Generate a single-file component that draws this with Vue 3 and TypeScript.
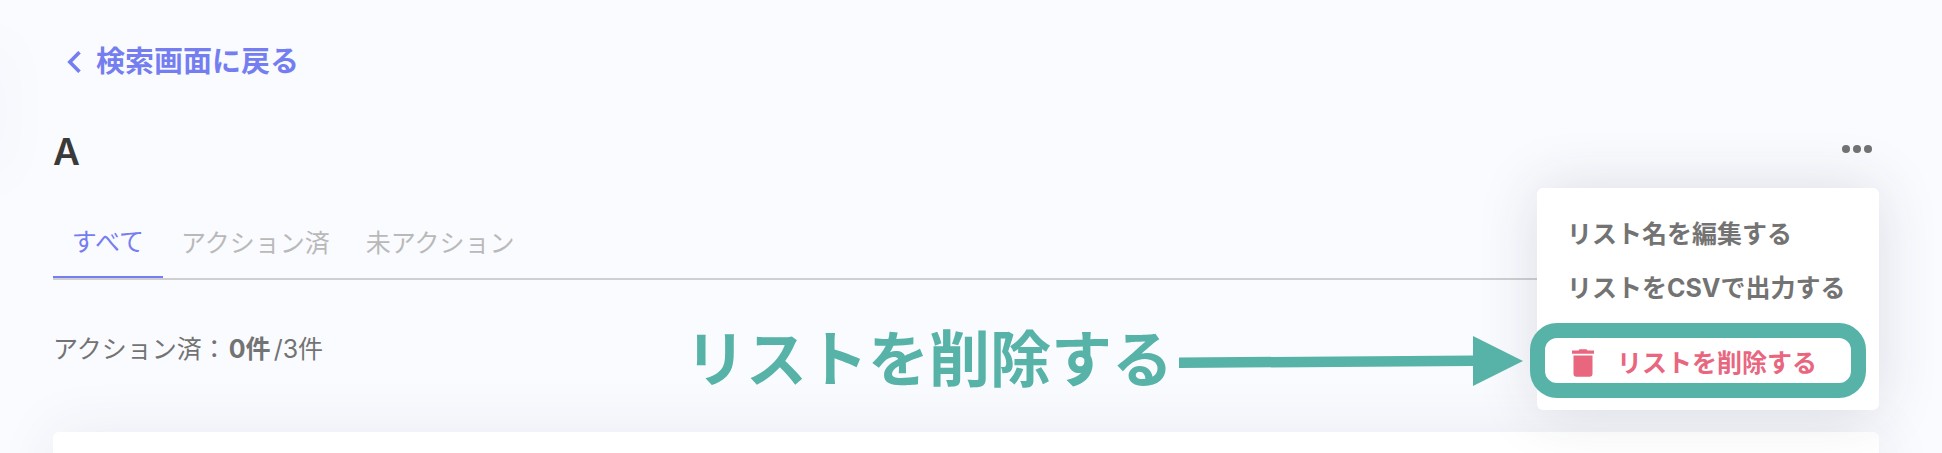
<script setup lang="ts">
import { ref } from 'vue'

interface Tab {
  id: string
  label: string
}

const tabs: Tab[] = [
  { id: 'all', label: 'すべて' },
  { id: 'done', label: 'アクション済' },
  { id: 'todo', label: '未アクション' },
]
const activeTab = ref('all')
const menuOpen = ref(true)
const doneCount = ref(0)
const totalCount = ref(3)
</script>

<template>
  <main class="page">
    <a class="back" href="#">
      <svg class="back-icon" viewBox="0 0 14 22" aria-hidden="true">
        <path d="M12.500 1.200 2.800 11l9.700 9.800" fill="none" stroke="currentColor" stroke-width="3.600" />
      </svg>
      検索画面に戻る
    </a>

    <header class="head">
      <h1 class="title">A</h1>
      <div class="more">
        <button class="more-button" type="button" aria-label="メニュー" :aria-expanded="menuOpen" @click="menuOpen = !menuOpen">
          <svg class="dots" viewBox="0 0 30 8" aria-hidden="true">
            <circle cx="4" cy="4" r="4" />
            <circle cx="15" cy="4" r="4" />
            <circle cx="26" cy="4" r="4" />
          </svg>
        </button>
        <div v-if="menuOpen" class="menu">
          <button class="item" type="button">リスト名を編集する</button>
          <button class="item" type="button">リストをCSVで出力する</button>
          <div class="danger">
            <button class="item delete" type="button">
              <svg class="trash" viewBox="0 -4 22 32" aria-hidden="true">
                <path d="M6.500 1.500 7.500.3h7l1 1.200H22v3.200H0V1.500zM1.500 6.500h19v18.200a3 3 0 0 1-3 3h-13a3 3 0 0 1-3-3z" />
              </svg>
              リストを削除する
            </button>
            <span class="ring"></span>
            <div class="callout">
              <span>リストを削除する</span>
              <svg class="arrow" viewBox="0 0 344 52" aria-hidden="true">
                <path d="M0 22.500 294 20.500V1l50 25-50 25V31L0 33z" />
              </svg>
            </div>
          </div>
        </div>
      </div>
    </header>

    <nav class="tabs">
      <button
        v-for="tab in tabs"
        :key="tab.id"
        class="tab"
        :class="{ active: tab.id === activeTab }"
        type="button"
        @click="activeTab = tab.id"
      >
        {{ tab.label }}
      </button>
    </nav>

    <p class="count">アクション済：<b>{{ doneCount }}件</b>/{{ totalCount }}件</p>

    <section class="card"></section>
  </main>
</template>

<style>
body {
  margin: 0;
  background: #fafbff;
}
</style>

<style scoped>
.page {
  position: relative;
  box-sizing: border-box;
  height: 100vh;
  overflow: hidden;
  display: flex;
  flex-direction: column;
  align-items: stretch;
  padding: 41px 63px 0 53px;
  background: #fafbff;
  color: #737373;
  font-family: Inter, "Noto Sans CJK JP", sans-serif;
  font-size: 25px;
}

.page > * {
  flex: none;
}

.page::before {
  content: "";
  position: absolute;
  left: -20px;
  top: 40px;
  width: 20px;
  height: 140px;
  box-shadow: 0 0 60px rgba(40, 50, 90, 0.05);
}

button {
  margin: 0;
  padding: 0;
  border: 0;
  background: none;
  color: inherit;
  font: inherit;
  cursor: pointer;
}

.back {
  display: flex;
  align-items: center;
  align-self: flex-start;
  gap: 15px;
  height: 42px;
  padding-left: 14px;
  color: #757ef0;
  font-size: 29px;
  font-weight: 700;
  line-height: 42px;
  text-decoration: none;
}

.back-icon {
  width: 14px;
  height: 22px;
}

.head {
  display: flex;
  align-items: flex-start;
  justify-content: space-between;
  height: 50px;
  margin-top: 44px;
}

.title {
  margin: 0;
  color: #3a3a3a;
  font-size: 37px;
  font-weight: 600;
  line-height: 50px;
}

.more {
  position: relative;
  z-index: 2;
  display: flex;
}

.more-button {
  display: flex;
  align-items: center;
  height: 44px;
  padding: 0 7px;
}

.dots {
  width: 30px;
  height: 8px;
  fill: #737373;
}

.menu {
  position: absolute;
  top: 61px;
  right: 0;
  box-sizing: border-box;
  width: 342px;
  padding: 17px 0 12px;
  border-radius: 6px;
  background: #fff;
  box-shadow: 0 0 60px rgba(40, 45, 60, 0.15);
}

.item {
  display: flex;
  align-items: center;
  width: 100%;
  height: 54px;
  padding-left: 30px;
  font-weight: 700;
  white-space: nowrap;
}

.danger {
  position: relative;
  margin-top: 10px;
}

.delete {
  gap: 23px;
  height: 75px;
  padding-left: 35px;
  color: #e9667f;
}

.trash {
  width: 22px;
  height: 32px;
  fill: currentColor;
}

.ring {
  position: absolute;
  inset: 0 13px 0 -7px;
  border: 15px solid #57b2a8;
  border-radius: 27px;
  pointer-events: none;
}

.callout {
  position: absolute;
  top: 0;
  right: 100%;
  display: flex;
  align-items: center;
  gap: 6px;
  height: 75px;
  margin-right: 14px;
  color: #57b2a8;
  font-size: 61px;
  font-weight: 700;
  line-height: 75px;
  white-space: nowrap;
}

.arrow {
  width: 344px;
  height: 52px;
  fill: currentColor;
}

.tabs {
  display: flex;
  height: 72px;
  margin-top: 29px;
  border-bottom: 2px solid #cfcfd2;
}

.tab {
  min-width: 110px;
  padding: 0 18px 3px;
  color: #b9b9b9;
}

.tab.active {
  border-bottom: 2px solid #757ef0;
  color: #757ef0;
}

.count {
  margin: 50px 0 0;
  line-height: 38px;
}

.count b {
  margin: 0 3px 0 2px;
}

.card {
  height: 300px;
  margin-top: 64px;
  border-radius: 6px;
  background: #fff;
  box-shadow: 0 0 60px rgba(40, 45, 80, 0.08);
}
</style>
